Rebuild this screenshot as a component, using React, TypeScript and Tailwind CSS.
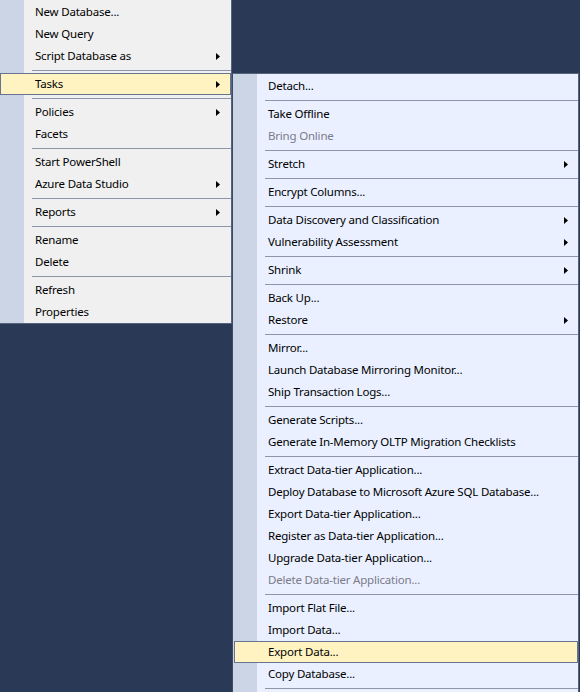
import type {ReactNode} from 'react';

type Entry =
  | {sep: true}
  | {label: string; sub?: boolean; disabled?: boolean; active?: boolean; sep?: false};

const dbMenu: Entry[] = [
  {label: 'New Database...'},
  {label: 'New Query'},
  {label: 'Script Database as', sub: true},
  {sep: true},
  {label: 'Tasks', sub: true, active: true},
  {sep: true},
  {label: 'Policies', sub: true},
  {label: 'Facets'},
  {sep: true},
  {label: 'Start PowerShell'},
  {label: 'Azure Data Studio', sub: true},
  {sep: true},
  {label: 'Reports', sub: true},
  {sep: true},
  {label: 'Rename'},
  {label: 'Delete'},
  {sep: true},
  {label: 'Refresh'},
  {label: 'Properties'},
];

const tasksMenu: Entry[] = [
  {label: 'Detach...'},
  {sep: true},
  {label: 'Take Offline'},
  {label: 'Bring Online', disabled: true},
  {sep: true},
  {label: 'Stretch', sub: true},
  {sep: true},
  {label: 'Encrypt Columns...'},
  {sep: true},
  {label: 'Data Discovery and Classification', sub: true},
  {label: 'Vulnerability Assessment', sub: true},
  {sep: true},
  {label: 'Shrink', sub: true},
  {sep: true},
  {label: 'Back Up...'},
  {label: 'Restore', sub: true},
  {sep: true},
  {label: 'Mirror...'},
  {label: 'Launch Database Mirroring Monitor...'},
  {label: 'Ship Transaction Logs...'},
  {sep: true},
  {label: 'Generate Scripts...'},
  {label: 'Generate In-Memory OLTP Migration Checklists'},
  {sep: true},
  {label: 'Extract Data-tier Application...'},
  {label: 'Deploy Database to Microsoft Azure SQL Database...'},
  {label: 'Export Data-tier Application...'},
  {label: 'Register as Data-tier Application...'},
  {label: 'Upgrade Data-tier Application...'},
  {label: 'Delete Data-tier Application...', disabled: true},
  {sep: true},
  {label: 'Import Flat File...'},
  {label: 'Import Data...'},
  {label: 'Export Data...', active: true},
  {label: 'Copy Database...'},
  {sep: true},
];

function Arrow() {
  return (
    <svg width="4" height="7" viewBox="0 0 4 7" className="block">
      <path d="M0 0 L4 3.5 L0 7 Z" fill="#000" />
    </svg>
  );
}

function Item({entry, inset}: {entry: Entry; inset: 'l' | 'r'}) {
  if (entry.sep) {
    return (
      <div className={`h-[6px] flex items-center ${inset === 'l' ? 'pl-[32px]' : 'pl-[31px]'}`}>
        <div className="h-px w-full bg-[#8d96a8]" />
      </div>
    );
  }
  const tone = entry.disabled ? 'text-[#7b7b89]' : 'text-[#000000]';
  let state: string;
  if (entry.active) {
    state = inset === 'l'
      ? 'bg-[#fff3c2] border border-[#66748f] pl-[34px] pr-[10px]'
      : 'bg-[#fff3c2] border border-[#66748f] pl-[33px] pr-[9px]';
  } else {
    state = inset === 'l' ? 'pl-[35px] pr-[11px]' : 'pl-[34px] pr-[10px]';
  }
  return (
    <div className={`h-[22px] flex items-center justify-between ${state}`}>
      <span className={`text-[11.5px] tracking-[-0.2px] leading-[22px] whitespace-nowrap ${tone}`}>
        {entry.label}
      </span>
      {entry.sub && <Arrow />}
    </div>
  );
}

function Menu({items, className, inset}: {items: Entry[]; className: string; inset: 'l' | 'r'}): ReactNode {
  return (
    <div className={className}>
      {items.map((e, i) => (
        <Item key={i} entry={e} inset={inset} />
      ))}
      {inset === 'r' && <div className="h-[12px]" />}
    </div>
  );
}

export default function App() {
  return (
    <div
      className="w-[580px] h-[692px] overflow-hidden bg-[#2a3a56] flex items-start"
      style={{fontFamily: '"Noto Sans", "Open Sans", sans-serif'}}
    >
      <Menu
        items={dbMenu}
        inset="l"
        className="w-[232px] shrink-0 pt-[1px] border-r border-b border-[#55637f] bg-[linear-gradient(to_right,#ccd5e5_24px,#f0f0f0_24px)]"
      />
      <Menu
        items={tasksMenu}
        inset="r"
        className="w-[347px] shrink-0 mt-[73px] p-[1px] pr-0 border border-[#55637f] border-l-[#3b4a66] bg-[linear-gradient(to_right,#ccd5e5_24px,#eaf0ff_24px)]"
      />
    </div>
  );
}
